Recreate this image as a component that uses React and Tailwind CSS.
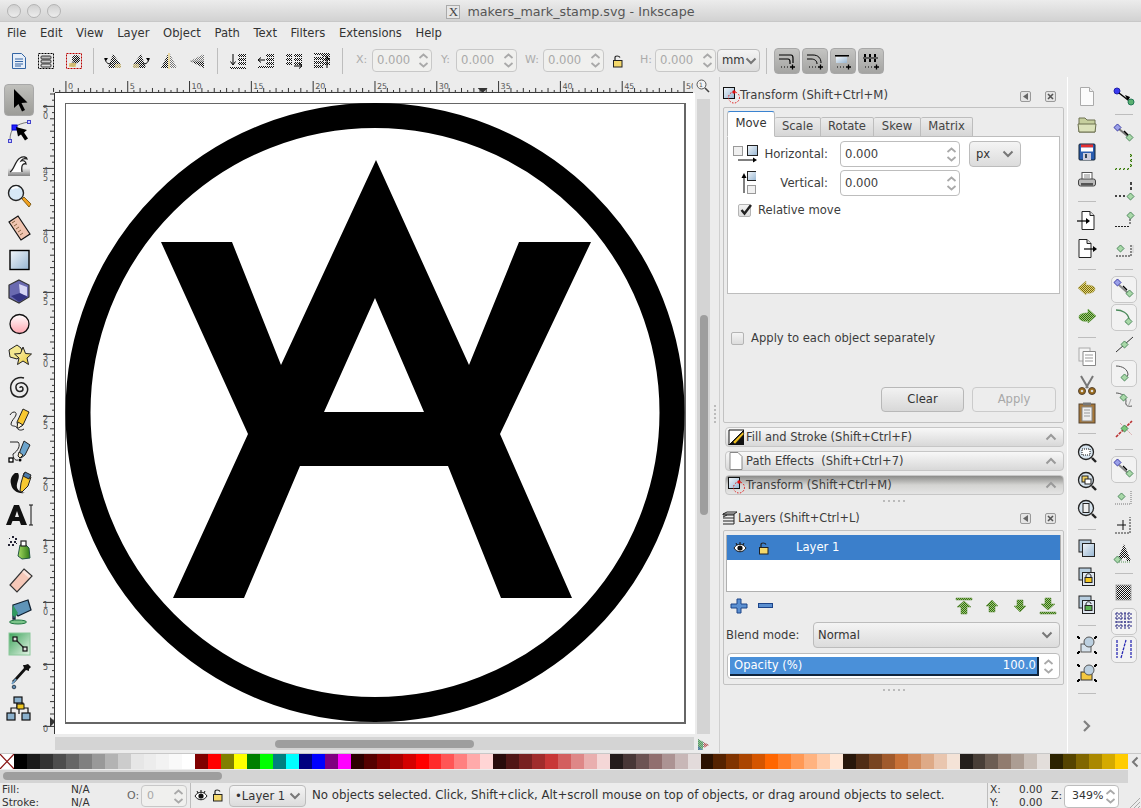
import React from "react";

const PALETTE = [
  "#000000","#1a1a1a","#333333","#4d4d4d","#666666","#808080","#999999","#b3b3b3","#cccccc","#e6e6e6","#ececec","#f2f2f2","#f9f9f9","#ffffff",
  "#800000","#ff0000","#808000","#ffff00","#008000","#00ff00","#008080","#00ffff","#000080","#0000ff","#800080","#ff00ff",
  "#2b0000","#550000","#800000","#aa0000","#d40000","#ff0000","#ff2a2a","#ff5555","#ff8080","#ffaaaa","#ffd5d5",
  "#280b0b","#501616","#782121","#a02c2c","#c83737","#d35f5f","#de8787","#e9afaf","#f4d7d7",
  "#241c1c","#483737","#6c5353","#916f6f","#ac9393","#c8b7b7","#e3dbdb",
  "#2b1100","#552200","#803300","#aa4400","#d45500","#ff6600","#ff7f2a","#ff9955","#ffb380","#ffccaa","#ffe6d5",
  "#28170b","#502d16","#784421","#a05a2c","#c87137","#d38d5f","#deaa87","#e9c6af","#f4e3d7",
  "#241f1c","#483e37","#6c5d53","#917c6f","#ac9d93","#c8beb7","#e3dedb",
  "#2b2200","#554400","#806600","#aa8800","#d4aa00","#ffcc00",
];

const MENU = ["File","Edit","View","Layer","Object","Path","Text","Filters","Extensions","Help"];

const Svg = ({ w = 24, h = 24, children }) => (
  <svg width={w} height={h} viewBox={`0 0 ${w} ${h}`} className="block shrink-0">{children}</svg>
);

// shared fills for the dithered inkscape icons
const Defs = () => (
  <svg width="0" height="0" className="absolute">
    <defs>
      {[["dk","#111","#ffffff80"],["gn","#2f6a12","#a4cc7a"],["ol","#7a6a10","#e4d878"],["gy","#777","#ffffff80"]].map(([id, c, bg]) => (
        <pattern key={id} id={id} width="2" height="2" patternUnits="userSpaceOnUse">
          <rect width="2" height="2" fill={bg} />
          <rect width="1" height="1" fill={c} />
          <rect x="1" y="1" width="1" height="1" fill={c} />
        </pattern>
      ))}
      <linearGradient id="gblue" x1="0" y1="0" x2="1" y2="1"><stop offset="0" stopColor="#f2f6fa" /><stop offset="1" stopColor="#97b6d2" /></linearGradient>
      <linearGradient id="gpink" x1="0" y1="0" x2="0" y2="1"><stop offset="0" stopColor="#fff" /><stop offset="1" stopColor="#ffa6b0" /></linearGradient>
      <linearGradient id="gyel" x1="0" y1="0" x2="1" y2="1"><stop offset="0" stopColor="#fff8c8" /><stop offset="1" stopColor="#e8c830" /></linearGradient>
      <linearGradient id="ggrey" x1="0" y1="0" x2="0" y2="1"><stop offset="0" stopColor="#eee" /><stop offset="1" stopColor="#777" /></linearGradient>
      <linearGradient id="ggreen" x1="0" y1="0" x2="1" y2="1"><stop offset="0" stopColor="#3fa45c" /><stop offset="1" stopColor="#e4f4e6" /></linearGradient>
      <linearGradient id="gbottle" x1="0" y1="0" x2="1" y2="0"><stop offset="0" stopColor="#a6dc60" /><stop offset="1" stopColor="#2f7a18" /></linearGradient>
    </defs>
  </svg>
);

/* ---------- left tool column ---------- */
const TOOLS = [
  <><path d="M9 3v19l4.500-4 3.500 7.500 3-1.500-3.500-7 6-.5z" fill="#000" /></>,
  <><path d="M5 22c0-11 5-16 19-18" fill="none" stroke="#777" /><rect x="7" y="7" width="5" height="5" fill="#22f" stroke="#00c" /><rect x="22.500" y="2.500" width="3" height="3" fill="#ccf" stroke="#44c" /><rect x="3.500" y="21.500" width="3" height="3" fill="#ccf" stroke="#44c" /><path d="M11 9l11 3-3 2.500 4 6-3 2-4-6-3 2z" fill="#000" /></>,
  <><path d="M3 18h22v8H3z" fill="url(#ggrey)" opacity="0.9" /><path d="M5 22c4-2 5-11 10-14 3-2 7-1 7 1-3-1-5 0-6 2 2-1 5 0 5 3-3-1-5 1-4 8" fill="#fff" stroke="#222" strokeWidth="1.300" /></>,
  <><circle cx="11" cy="11" r="7.500" fill="#d7e8f6" stroke="#222" strokeWidth="1.400" /><path d="M7 7c2-2 5-2 6-1" stroke="#fff" strokeWidth="2" fill="none" /><path d="M17 17l2-2 7 7-2 3z" fill="#f0a020" stroke="#6a4800" strokeWidth="0.800" /></>,
  <><path d="M4 8l9-6 12 18-9 6z" fill="#f0c4b0" stroke="#111" strokeWidth="1.200" /><path d="M7 9l3-2M9 12l3-2M11 15l3-2M13 18l3-2M15 21l3-2" stroke="#864" /></>,
  <><rect x="5" y="4.500" width="19" height="19" fill="url(#gblue)" stroke="#000" strokeWidth="1.400" /></>,
  <><path d="M14 2l10 5v12l-10 6-10-5V7z" fill="#6a6ab0" stroke="#333" strokeWidth="1.200" /><path d="M14 6l8 3v9l-7-2z" fill="#d6d6f4" /><path d="M6 18l9-3 8 4-9 5z" fill="#343482" /></>,
  <><circle cx="14.500" cy="14" r="9.500" fill="url(#gpink)" stroke="#111" strokeWidth="1.300" /></>,
  <><path d="M4 8l8-5 4 3 2 6-6 5-7-2z" fill="#f4e890" stroke="#222" /><path d="M18 5l2.500 6.500 6 .5-4.500 4 1.500 6.500-5.500-3.500-5.500 3.500 1.500-6.500-4.500-4 6-.5z" fill="url(#gyel)" stroke="#222" /></>,
  <><path d="M15 14c0-2 3-1.500 3 1 0 3-6 4-7-1-.8-5 6-7 10-3 4 5 0 13-8 12-8-1-9-11-5-16 3-3.500 8-4 11-3" fill="none" stroke="#222" strokeWidth="1.500" /></>,
  <><path d="M5 9c2-4 7-4 6 0-1 3-5 6-5 9 0 3 5 1 6 4 1 2 4 3 7 1" fill="none" stroke="#222" /><path d="M18 3l6 3-6 13-5 3-1-6z" fill="#f8c830" stroke="#222" /><path d="M13 16l5 3-4.500 3-1.500-1z" fill="#fff4d8" stroke="#222" /></>,
  <><path d="M5 4h8c3 3 0 9-5 12 0 4 2 7 5 6" fill="none" stroke="#222" /><rect x="4" y="20" width="4" height="4" fill="#fff" stroke="#000" strokeWidth="1.300" /><circle cx="15" cy="22" r="1.500" fill="#000" /><path d="M19 3l6 4-5 10-4 3-2-2 1-5z" fill="#6ca4cc" stroke="#222" /><path d="M14 14l4 3-3 3-2-2z" fill="#f8e8c0" stroke="#222" /></>,
  <><path d="M10 3c-4 3-5 7-4 11 1 6 6 10 14 9-6-1-9-4-8-9 1-4 3-8 1-11z" fill="#111" /><path d="M19 3l7 4-3 9-6 6-2-1 1-8z" fill="#f8c830" stroke="#222" /><path d="M20 2l6 3-2 4-6-3z" fill="#4a7aaa" stroke="#222" /></>,
  <><path d="M9 3h5l8 20h-6l-1.500-4h-7L6 23H1z" fill="#111" /><path d="M10 15h4l-2-6z" fill="#ececec" /><path d="M24 3h4M24 23h4M26 3v20" stroke="#111" /></>,
  <><path d="M15 11h6l3 3 1 10-8 1-4-3z" fill="url(#gbottle)" stroke="#254" /><rect x="16" y="7" width="5" height="5" fill="#fff" stroke="#222" strokeWidth="1.200" /><path d="M4 4h1v1H4zM7 2h2v2H7zM10 4h2v2h-2zM5 7h2v2H5zM9 7h2v2H9zM3 10h2v2H3zM7 10h2v2H7zM11 9h1v1h-1z" fill="#223" /></>,
  <><path d="M19 3l8 7-15 16-7-7z" fill="#f6c8b8" stroke="#333" strokeWidth="1.200" /><path d="M19 4l7 6-2 2-7-6z" fill="#fff" opacity="0.500" /></>,
  <><ellipse cx="13" cy="24" rx="8.500" ry="2" fill="#7cc48a" stroke="#274" /><path d="M8 7l15-5 3 10-13 6-3-3v6h-2z" fill="#5f94b8" stroke="#123" strokeWidth="1.300" /><path d="M8 7l5 8-3 4-3-2z" fill="#2f9a60" /></>,
  <><rect x="4" y="3" width="21" height="22" fill="url(#ggreen)" stroke="#8ac89a" /><path d="M10 9l10 10" stroke="#222" strokeWidth="1.200" /><rect x="8" y="7" width="4" height="4" fill="#ddd" stroke="#111" strokeWidth="1.200" /><rect x="18" y="17" width="4" height="4" fill="#ddd" stroke="#111" strokeWidth="1.200" /></>,
  <><path d="M23 2l3 3-2 2 0 2-3-1-9 10-3 3-2-2 3-3 9-10-1-3 2 0z" fill="#111" /><path d="M11 17l-4 5" stroke="#6a9ac0" strokeWidth="2" /><circle cx="9" cy="25" r="1.800" fill="#5c88ae" stroke="#345" /></>,
  <><path d="M12 9v5H6v6M16 9h2v5h5v6M14 12v8" fill="none" stroke="#111" strokeWidth="1.200" /><rect x="9" y="3" width="8" height="6" fill="#8ab0cc" stroke="#111" strokeWidth="1.200" /><rect x="12" y="10" width="7" height="5" fill="#f0c820" stroke="#111" /><rect x="2" y="19" width="8" height="7" fill="#8ab0cc" stroke="#111" strokeWidth="1.200" /><rect x="17" y="19" width="8" height="7" fill="#8ab0cc" stroke="#111" strokeWidth="1.200" /></>,
];

/* ---------- top command bar ---------- */
const DocBlue = () => (
  <Svg w={16} h={18}><path d="M1.500 1.500h9l4 4v11h-13z" fill="#e6eef8" stroke="#3465a4" /><path d="M4 7h8M4 9.500h8M4 12h8M4 14h6" stroke="#3465a4" /></Svg>
);
const SelAll = () => (
  <Svg w={18} h={18}><rect x="1.500" y="1.500" width="15" height="15" fill="none" stroke="#000" strokeDasharray="2 1" /><rect x="4" y="4" width="10" height="3" rx="1" fill="#bbb" stroke="#333" /><rect x="4" y="8" width="10" height="3" rx="1" fill="#ccc" stroke="#333" /><rect x="4" y="12" width="10" height="3" rx="1" fill="#ddd" stroke="#333" /></Svg>
);
const SelLayers = () => (
  <Svg w={18} h={18}><rect x="1.500" y="1.500" width="15" height="15" fill="none" stroke="#b00" strokeDasharray="2 1" /><path d="M4 14l8-10 3 3-6 8z" fill="#999" /><circle cx="11" cy="7" r="4" fill="url(#dk)" /><path d="M4 11h7v4H4z" fill="#e8c860" opacity="0.700" /></Svg>
);
const Rot = ({ flip }) => (
  <Svg w={18} h={18}><g transform={flip ? "translate(18 0) scale(-1 1)" : undefined}><path d="M9 2l8 11v3H4z" fill="url(#dk)" /><path d="M11 12h6v4h-6z" fill="#e8d8a0" opacity="0.700" /><path d="M1 7c1 4 3 5 6 5" fill="none" stroke="#000" /><path d="M0 6h4l-2 3z" fill="#000" /></g></Svg>
);
const FlipH = () => (
  <Svg w={18} h={18}><path d="M8 2v14H1z" fill="url(#dk)" /><path d="M10 2v14h7z" fill="url(#gy)" /><path d="M9 1v16" stroke="#e8c860" /></Svg>
);
const FlipV = () => (
  <Svg w={18} h={18}><path d="M16 2v7L2 9z" fill="url(#gy)" /><path d="M16 16V9L2 9z" fill="url(#dk)" /><path d="M2 9h14" stroke="#bbb" /></Svg>
);
const Order = ({ kind }) => (
  <Svg w={18} h={18}>
    <path d="M9 2h8v3H9zM9 6h8v3H9zM9 10h8v3H9z" fill="url(#dk)" />
    {kind === 0 && <><path d="M4 2v10M1.500 9.500L4 13l2.500-3.500" stroke="#000" fill="none" /><path d="M1 15h16v2H1z" fill="url(#dk)" /></>}
    {kind === 1 && <><path d="M8 8H2M4 5.500L1 8l3 2.500" stroke="#000" fill="none" /><path d="M1 14h16v2H1z" fill="url(#dk)" /></>}
    {kind === 2 && <><path d="M1 2h6v3H1zM1 6h6v3H1zM1 10h6v3H1z" fill="url(#dk)" /><path d="M9 14h7M14 11.500l3 2.500-3 2.500" stroke="#000" fill="none" /></>}
    {kind === 3 && <><path d="M1 1h16v2H1z" fill="url(#dk)" /><path d="M14 16V5M11.500 8L14 4.500 16.500 8" stroke="#000" fill="none" /><path d="M1 5h9v3H1zM1 9h9v3H1zM1 13h9v3H1z" fill="url(#dk)" /></>}
  </Svg>
);
const TinyLock = ({ open }) => (
  <Svg w={12} h={14}><path d={open ? "M3 6V3.500c0-2 4-2 5 0" : "M3 6V3.500c0-3 6-3 6 0V6"} fill="none" stroke="#222" strokeWidth="1.200" /><rect x="1.500" y="6.500" width="8.500" height="6.500" fill="#f4d86a" stroke="#222" /></Svg>
);
const SnapSmall = ({ kind }) => (
  <Svg w={20} h={18}>
    {kind === 0 && <path d="M2 3h12c2 0 2 1 2 3v5M2 7h9c2 0 2 1 2 3v2" fill="none" stroke="#000" strokeWidth="1.200" />}
    {kind === 1 && <path d="M2 3h6c5 0 8 3 8 8M2 7h4c4 0 6 2 6 5" fill="none" stroke="#000" />}
    {kind === 2 && <><path d="M2 3h14v1.500H2z" fill="#000" /><path d="M3 5h11v6H3z" fill="url(#gblue)" /></>}
    {kind === 3 && <path d="M3 2h2v3H3zM8 2h2v3H8zM13 2h2v3h-2zM3 7h2v3H3zM8 7h2v3H8zM13 7h2v3h-2zM2 5.500h15v1H2z" fill="#000" />}
    <path d="M4 15h1M7 15h1M10 15h1" stroke="#000" />
    <path d="M13 15h5M15.500 12.500v5" stroke="#000" strokeWidth="1.300" />
  </Svg>
);

const Arrows = () => (
  <div className="flex flex-col w-[14px] h-full items-center justify-center gap-[3px] text-[#a9a9a9]">
    <svg width="11" height="6"><path d="M1.500 5L5.500 1.500 9.500 5" fill="none" stroke="currentColor" strokeWidth="1.800" /></svg>
    <svg width="11" height="6"><path d="M1.500 1L5.500 4.500 9.500 1" fill="none" stroke="currentColor" strokeWidth="1.800" /></svg>
  </div>
);
const Down = ({ c = "#777" }) => (
  <svg width="12" height="8" className="shrink-0"><path d="M1.500 1.500L6 6l4.500-4.500" fill="none" stroke={c} strokeWidth="2" /></svg>
);

const Spin = ({ value, className, text = "text-[#3c3c3c]" }) => (
  <div className={`flex items-center rounded-[4px] border border-[#bdbdbd] bg-white pl-[4px] pr-[1px] ${className}`}>
    <span className={`flex-1 pt-px text-[11.600px] ${text}`}>{value}</span>
    <Arrows />
  </div>
);
const DimSpin = ({ className }) => (
  <div className={`flex items-center rounded-[4px] border border-[#c8c8c8] bg-[#f0f0ee] pl-[4px] pr-[1px] h-[23px] ${className}`}>
    <span className="flex-1 pt-px text-[11.600px] text-[#a8a8a8]">0.000</span>
    <Arrows />
  </div>
);
const Combo = ({ label, className, pad = "px-[6px]" }) => (
  <div className={`flex items-center justify-between rounded-[4px] border border-[#bcbcbc] bg-gradient-to-b from-[#f4f4f4] to-[#dcdcdc] text-[11.600px] text-[#333] ${pad} ${className}`}>
    <span className="pt-px">{label}</span>
    <Down />
  </div>
);

const Sep = () => <div className="w-px h-[26px] bg-[#bdbdbd] shrink-0" />;
const Dim = ({ children, className }) => <span className={`text-[11px] text-[#ababab] ${className}`}>{children}</span>;

const TBtn = ({ children, className }) => (
  <div className={`flex items-center justify-center h-[28px] shrink-0 ${className}`}>{children}</div>
);

/* ---------- rulers ---------- */
const HRuler = () => {
  const ticks = [];
  for (let i = -2; i <= 100; i++) {
    const x = 66 + i * 6.2;
    const major = i >= 0 && i % 10 === 0;
    ticks.push(<line key={i} x1={x} x2={x} y1={major ? 81 : i % 2 === 0 ? 88 : 90} y2={92} stroke="#333" />);
  }
  return (
    <svg width="657" height="16" viewBox="38 77 657 16" className="block">
      <line x1="55" x2="695" y1="92.500" y2="92.500" stroke="#333" />
      {ticks}
      {Array.from({ length: 11 }, (_, i) => (
        <text key={i} x={68 + i * 62} y="89" fontSize="8" fill="#555" fontFamily="DejaVu Sans">{i * 5}</text>
      ))}
      <path d="M479 88h10l-5 5z" fill="#333" />
    </svg>
  );
};
const VRuler = () => {
  const ticks = [];
  for (let i = 0; i <= 102; i++) {
    const y = 94 + i * 6.2;
    const k = i - 2;
    const major = k % 10 === 0;
    ticks.push(<line key={i} y1={y} y2={y} x1={major ? 43 : k % 2 === 0 ? 50 : 52} x2={55} stroke="#333" />);
  }
  return (
    <svg width="17" height="641" viewBox="38 93 17 641" className="block shrink-0">
      <line y1="93" y2="734" x1="54.500" x2="54.500" stroke="#333" />
      {ticks}
      {Array.from({ length: 11 }, (_, i) => {
        const y = 104 + i * 62;
        const label = String(50 - i * 5);
        return label.split("").map((d, j) => (
          <text key={`${i}-${j}`} x="43" y={y + 8 + j * 7.300} fontSize="8" fill="#555" fontFamily="DejaVu Sans">{d}</text>
        ));
      })}
      <path d="M50 717l5 5-5 5z" fill="#333" />
    </svg>
  );
};

/* ---------- right column icons ---------- */
const PageI = (
  <><path d="M5.500 2.500h9l4 4v14h-13z" fill="#fbfbfb" stroke="#aaa" /><path d="M14.500 2.500v4h4" fill="#eee" stroke="#aaa" /></>
);
const COL1 = [
  [PageI],
  [<><path d="M4 5h6l2 2h8v12H4z" fill="#c6cf9e" stroke="#6c7050" /><path d="M3 11h18l-1 8H4z" fill="#dbe2ba" stroke="#6c7050" /></>],
  [<><rect x="4" y="3" width="16" height="16" rx="1" fill="#2a5db0" stroke="#123" /><rect x="6" y="3.500" width="12" height="3" fill="#e53030" /><rect x="6" y="6.500" width="12" height="4" fill="#fff" /><rect x="8" y="12" width="8" height="7" fill="#ccd" /><rect x="10" y="13" width="2" height="4" fill="#345" /></>],
  [<><rect x="7" y="3.500" width="10" height="7" fill="#fff" stroke="#555" /><path d="M9 6h6M9 8h6" stroke="#888" /><rect x="3.500" y="10" width="17" height="7" rx="2" fill="#bbb" stroke="#444" /><rect x="6" y="14" width="12" height="2.500" fill="#555" /></>],
  "sep",
  [<><path d="M7 2.500h8l4 4v14H7z" fill="#fff" stroke="#222" /><path d="M15 2.500v4h4" fill="#ddd" stroke="#222" /><path d="M2 12h11" stroke="#000" strokeWidth="1.200" /><path d="M11 9l4 3-4 3z" fill="#000" /></>],
  [<><path d="M4 2.500h8l4 4v14H4z" fill="#fff" stroke="#222" /><path d="M12 2.500v4h4" fill="#ddd" stroke="#222" /><path d="M9 12h10" stroke="#000" strokeWidth="1.200" /><path d="M18 9l4 3-4 3z" fill="#000" /></>],
  "sep",
  [<path d="M3 11l8-7v4c5 0 9 1 9 4 0 3-4 5-9 4v2z" fill="url(#ol)" stroke="#b4a860" strokeWidth="0.500" />],
  [<path d="M21 11l-8-7v4c-5 0-9 1-9 4 0 3 4 5 9 4v2z" fill="url(#gn)" stroke="#5a9a3a" strokeWidth="0.500" />],
  "sep",
  [<><rect x="4" y="3" width="11" height="13" fill="#f4f4f4" stroke="#aaa" /><path d="M8 6.500h12.500v14H8z" fill="#fff" stroke="#888" /><path d="M10 10h8M10 13h8M10 16h8" stroke="#999" /></>],
  [<><path d="M6 3l7 12M18 3l-7 12" stroke="#777" strokeWidth="2" /><circle cx="7" cy="18" r="3.500" fill="#9a6a1a" stroke="#543" /><circle cx="17" cy="18" r="3.500" fill="#9a6a1a" stroke="#543" /><circle cx="7" cy="18" r="1.300" fill="#ddd" /><circle cx="17" cy="18" r="1.300" fill="#ddd" /></>],
  [<><rect x="4" y="3" width="16" height="19" fill="#a87838" stroke="#543" /><rect x="7" y="6" width="10" height="14" fill="#eee" stroke="#888" /><path d="M9 9h6M9 12h6M9 15h6" stroke="#999" /><rect x="8" y="1.500" width="8" height="3" fill="#777" /></>],
  "sep",
  [<><circle cx="11" cy="11" r="7.500" fill="#d7e4ee" stroke="#222" strokeWidth="1.300" /><rect x="7" y="8" width="8" height="6" fill="#fff" stroke="#111" strokeDasharray="1 1" /><path d="M17 17l4 4" stroke="#222" strokeWidth="2.400" /></>],
  [<><circle cx="11" cy="11" r="7.500" fill="#d7e4ee" stroke="#222" strokeWidth="1.300" /><rect x="7" y="7" width="6" height="6" fill="#f0d060" stroke="#222" /><rect x="10" y="10" width="6" height="5" fill="#fff" stroke="#222" /><path d="M17 17l4 4" stroke="#222" strokeWidth="2.400" /></>],
  [<><circle cx="11" cy="11" r="7.500" fill="#d7e4ee" stroke="#222" strokeWidth="1.300" /><rect x="8" y="6.500" width="6" height="9" fill="#eee" stroke="#222" /><path d="M17 17l4 4" stroke="#222" strokeWidth="2.400" /></>],
  "sep",
  [<><rect x="4" y="3" width="12" height="12" fill="#b8cee0" stroke="#222" /><rect x="7.500" y="6.500" width="12" height="13" fill="url(#gblue)" stroke="#222" /></>],
  [<><rect x="4" y="3" width="12" height="12" fill="#b8cee0" stroke="#222" /><rect x="7.500" y="7.500" width="12" height="13" fill="#dfe7f0" stroke="#222" /><path d="M11 12.500v-1.500c0-3 5-3 5 0v1.500" fill="none" stroke="#222" /><rect x="10" y="12.500" width="7" height="5" fill="#f4c820" stroke="#222" /></>],
  [<><rect x="4" y="3" width="12" height="12" fill="#b8cee0" stroke="#222" /><rect x="7.500" y="7.500" width="12" height="13" fill="#dfe7f0" stroke="#222" /><path d="M11 12.500v-1.500c0-3 5-3 5 0" fill="none" stroke="#222" /><rect x="10" y="12.500" width="7" height="5" fill="#5cb050" stroke="#222" /></>],
  "sep",
  [<><path d="M3 5h2M19 5h2M3 19h2M19 19h2M3 3v2M21 3v2M3 19v2M21 19v2" stroke="#000" strokeWidth="2" /><rect x="6" y="11" width="10" height="8" fill="#d6e2ec" stroke="#555" /><circle cx="14" cy="9" r="5" fill="#bcd0e0" stroke="#555" /></>],
  [<><path d="M3 5h2M19 5h2M3 19h2M19 19h2M3 3v2M21 3v2M3 19v2M21 19v2" stroke="#000" strokeWidth="2" /><rect x="6" y="11" width="11" height="8" fill="#f4c840" stroke="#333" /><circle cx="14" cy="9" r="5" fill="#bcd0e0" stroke="#555" /></>],
  "sep",
];

const Node = ({ x, y, c = "url(#gy)" }) => <rect x={x} y={y} width="5" height="5" transform={`rotate(45 ${x + 2.5} ${y + 2.5})`} fill={c} stroke="#3a7a4a" strokeWidth="0.800" />;
const BlueNode = ({ x, y }) => <rect x={x} y={y} width="5" height="5" transform={`rotate(45 ${x + 2.5} ${y + 2.5})`} fill="#9aa0e8" stroke="#22229a" strokeWidth="0.800" />;

const COL2 = [
  { h: 27, i: <><circle cx="5" cy="6" r="3" fill="#3a3af0" stroke="#22a" /><path d="M7 8l9 7" stroke="#000" strokeWidth="1.400" /><path d="M13 10l5 2-2 4z" fill="#000" /><circle cx="19" cy="17" r="3" fill="#5ab070" stroke="#275" /></> },
  { h: 8 },
  { h: 29, i: <><path d="M7 8l11 9" stroke="#777" strokeWidth="2" /><BlueNode x={3} y={4} /><Node x={15} y={14} c="#a8d8a8" /><path d="M12 10l4 4" stroke="#000" strokeWidth="1.400" /></> },
  { h: 29, i: <path d="M18 4h2v3h-2zM18 9h2v3h-2zM18 14h2v3h-2zM3 18h2v2H3zM7 18h2v2H7zM11 18h2v2h-2zM15 18h2v2h-2z" fill="url(#gn)" /> },
  { h: 29, i: <><path d="M18 3h2v3h-2zM18 8h2v3h-2zM3 16h2v2H3zM7 16h2v2H7zM11 16h2v2h-2z" fill="#444" /><Node x={16} y={15} c="#a8d8a8" /></> },
  { h: 29, i: <><path d="M3 18.500h14M18 16v-8" stroke="#222" strokeDasharray="2 1" fill="none" /><Node x={16} y={5} c="#a8d8a8" /></> },
  { h: 29, i: <><path d="M4 19h15M19 19V8" stroke="#222" strokeDasharray="2 1" fill="none" /><Node x={6} y={9} c="#a8d8a8" /><path d="M21 8v8" stroke="#ccc" /></> },
  { h: 12 },
  { h: 28, box: 1, i: <><path d="M7 8l10 9" stroke="#888" strokeWidth="2" /><BlueNode x={3} y={3} /><Node x={15} y={14} c="#a8d8a8" /><path d="M11 9l4 4" stroke="#000" strokeWidth="1.200" /></> },
  { h: 28, box: 1, i: <><path d="M4 5c6 0 12 3 13 9l-3 4" fill="none" stroke="#4a8a5a" strokeWidth="1.300" /><Node x={14} y={14} c="#a8d8a8" /></> },
  { h: 28, i: <><path d="M4 19L21 4" stroke="#333" /><Node x={10} y={9} c="#a8d8a8" /></> },
  { h: 28, box: 1, i: <><path d="M4 5c6 0 12 3 12 9l-3 4" fill="none" stroke="#555" /><Node x={10} y={14} c="#a8d8a8" /></> },
  { h: 28, i: <><path d="M4 4c5 0 10 3 10 8-1 5 2 6 6 5" fill="none" stroke="#555" /><path d="M19 10l-3 8" stroke="#aaa" /><Node x={9} y={6} c="#a8d8a8" /></> },
  { h: 28, i: <><path d="M4 20L20 4" stroke="#b33" strokeDasharray="3 1" strokeWidth="1.600" /><path d="M8 6l12 12" stroke="#b33" strokeDasharray="3 1" opacity="0.400" /><Node x={10} y={9} c="#7ac87a" /></> },
  { h: 12 },
  { h: 28, box: 1, i: <><path d="M7 8l10 9" stroke="#888" strokeWidth="2" /><BlueNode x={3} y={3} /><Node x={15} y={14} c="#a8d8a8" /><path d="M11 9l4 4" stroke="#000" strokeWidth="1.200" /></> },
  { h: 28, i: <><path d="M3 19h15M19 19V5" stroke="#777" strokeDasharray="1 1" fill="none" /><Node x={7} y={9} c="#a8d8a8" /></> },
  { h: 28, i: <><path d="M3 20h15M18 20V4" stroke="#333" strokeDasharray="2 1" fill="none" /><path d="M5 12h9M11 7v10" stroke="#111" /></> },
  { h: 28, i: <><path d="M5 20L12 3l7 17h-4l-1-3h-4l-1 3z" fill="url(#dk)" /><Node x={3} y={16} c="#a8d8a8" /><path d="M7 21h12" stroke="#5a9a5a" strokeDasharray="1 1" /></> },
  { h: 12 },
  { h: 28, i: <rect x="4" y="4" width="15" height="15" fill="url(#dk)" stroke="#aaa" /> },
  { h: 28, box: 1, i: <path d="M5 3v17M9 3v17M13 3v17M17 3v17M3 5h17M3 9h17M3 13h17M3 17h17" stroke="#23237e" strokeDasharray="2 1" /> },
  { h: 28, box: 1, i: <path d="M5 3v18M19 3v18M9 21l5-18" stroke="#2a2ab4" strokeWidth="1.300" strokeDasharray="3 1" fill="none" /> },
];

/* ---------- dock pieces ---------- */
const TransformI = () => (
  <Svg w={17} h={17}><rect x="0.500" y="0.500" width="11" height="11" fill="url(#gblue)" stroke="#111" /><circle cx="11" cy="10.500" r="5.500" fill="none" stroke="#e01010" strokeDasharray="1.500 1.500" /><circle cx="11" cy="5" r="1.700" fill="#e01010" /></Svg>
);
const DockBtns = () => (
  <div className="flex items-center gap-[14px] text-[#777]">
    <div className="w-[11px] h-[11px] rounded-[2px] border border-[#999] bg-[#e4e4e4] flex items-center justify-center">
      <svg width="5" height="7"><path d="M5 0v7L0 3.500z" fill="#666" /></svg>
    </div>
    <div className="w-[11px] h-[11px] rounded-[2px] border border-[#999] bg-[#e4e4e4] flex items-center justify-center">
      <svg width="7" height="7"><path d="M1 1l5 5M6 1L1 6" stroke="#555" strokeWidth="1.600" /></svg>
    </div>
  </div>
);
const Dots = ({ className }) => (
  <div className={`flex justify-center gap-[3px] ${className}`}>
    {[0, 1, 2, 3, 4].map((d) => <span key={d} className="w-[2px] h-[2px] bg-[#bbb]" />)}
  </div>
);
const Up = () => (
  <svg width="12" height="8" className="shrink-0"><path d="M1.500 6.500L6 2l4.500 4.500" fill="none" stroke="#9a9a9a" strokeWidth="2" /></svg>
);
const Bar = ({ icon, label, dark }) => (
  <div className={`flex items-center h-[20px] w-[339px] ml-[5px] pl-[1px] pr-[6px] rounded-[4px] border border-[#c6c6c6] ${dark ? "bg-gradient-to-b from-[#8c8c8a] via-[#d4d4d2] to-[#e4e4e4]" : "bg-gradient-to-b from-[#f8f8f8] to-[#d8d8d8]"}`}>
    <div className="w-[18px] flex justify-center shrink-0">{icon}</div>
    <span className="flex-1 ml-[1px] pt-px text-[11.500px] text-[#3c3c3c] whitespace-pre">{label}</span>
    <Up />
  </div>
);
const Check = ({ on, className }) => (
  <div className={`w-[13px] h-[13px] rounded-[2px] border border-[#b4b4b4] bg-gradient-to-b from-[#f4f4f4] to-[#dcdcdc] relative shrink-0 ${className}`}>
    {on && <svg width="16" height="14" className="absolute -top-[2px] left-0"><path d="M2.500 7l3 3.500L12 2" fill="none" stroke="#222" strokeWidth="2.400" /></svg>}
  </div>
);
const Arrow = ({ d, fill = "url(#gn)" }) => (
  <Svg w={18} h={18}><path d={d} fill={fill} stroke="#5f8a3e" strokeWidth="0.500" /></Svg>
);
const Eye = () => (
  <Svg w={14} h={12}><path d="M1 6c3-5 9-5 12 0-3 5-9 5-12 0z" fill="#fff" stroke="#111" /><circle cx="7" cy="6" r="2.600" fill="#111" /><path d="M3 1l1 2M7 0v2M11 1l-1 2" stroke="#111" /></Svg>
);

const TABS = [["Scale", "w-[46px]"], ["Rotate", "w-[53px]"], ["Skew", "w-[47px]"], ["Matrix", "w-[52px]"]];

const TransformPanel = () => (
  <div className="ml-[3px] w-[341px] h-[316px] border border-[#c2c2c2] rounded-[2px] pl-[3px] pt-[4px] shrink-0">
    <div className="flex items-end h-[25px] -mb-px relative">
      <div className="w-[48px] h-[26px] bg-white rounded-t-[3px] border border-[#bdbdbd] border-b-white border-t-[#3b83d0] flex items-center justify-center text-[11.600px] text-[#333]">Move</div>
      {TABS.map(([t, w]) => (
        <div key={t} className={`${w} h-[20px] bg-gradient-to-b from-[#ececec] to-[#d6d6d6] border border-l-0 border-[#bdbdbd] rounded-t-[2px] flex items-center justify-center text-[11.600px] text-[#444]`}>{t}</div>
      ))}
    </div>
    <div className="w-[333px] h-[158px] bg-white border border-[#bdbdbd] pt-[4px]">
      <div className="flex items-center h-[26px]">
        <div className="w-[30px] pl-[5px]">
          <Svg w={25} h={20}><rect x="0.500" y="2.500" width="9" height="9" fill="#f0f0f0" stroke="#999" /><rect x="14.500" y="1.500" width="10" height="10" fill="url(#gblue)" stroke="#222" /><path d="M5 16h16" stroke="#000" /><path d="M20 13.500l4 2.500-4 2.500z" fill="#000" /></Svg>
        </div>
        <div className="w-[70px] pt-px text-right text-[11.700px] text-[#3c3c3c]">Horizontal:</div>
        <Spin value="0.000" className="ml-[12px] w-[120px] h-[26px]" />
        <Combo label="px" className="ml-[9px] w-[52px] h-[26px]" />
      </div>
      <div className="flex items-center h-[26px] mt-[3px]">
        <div className="w-[30px] pl-[12px]">
          <Svg w={16} h={26}><path d="M4 6v17" stroke="#000" /><path d="M1.500 8L4 3l2.500 5z" fill="#000" /><rect x="7.500" y="1.500" width="9" height="9" fill="url(#gblue)" stroke="#222" /><rect x="7.500" y="15.500" width="8" height="8" fill="#f0f0f0" stroke="#999" /></Svg>
        </div>
        <div className="w-[70px] pt-px text-right text-[11.700px] text-[#3c3c3c]">Vertical:</div>
        <Spin value="0.000" className="ml-[12px] w-[120px] h-[26px]" />
      </div>
      <div className="flex items-center mt-[6px] pl-[10px] gap-[7px]">
        <Check on />
        <span className="text-[11.600px] text-[#3c3c3c]">Relative move</span>
      </div>
    </div>
    <div className="flex items-center mt-[36px] ml-[4px] gap-[7px]">
      <Check />
      <span className="text-[11.600px] text-[#3c3c3c]">Apply to each object separately</span>
    </div>
    <div className="flex justify-end gap-[8px] mt-[40px] pr-[7px]">
      <div className="w-[83px] h-[25px] rounded-[4px] border border-[#b8b8b8] bg-gradient-to-b from-[#f2f2f2] to-[#d8d8d8] flex items-center justify-center text-[11.600px] text-[#333]">Clear</div>
      <div className="w-[84px] h-[25px] rounded-[4px] border border-[#cbcbcb] bg-[#ededed] flex items-center justify-center text-[11.600px] text-[#a8a8a8]">Apply</div>
    </div>
  </div>
);

const LayersPanel = () => (
  <div className="ml-[3px] w-[341px] h-[155px] border border-[#c2c2c2] rounded-[2px] px-[2px] pt-[4px] shrink-0">
    <div className="w-[335px] h-[57px] bg-white border border-[#b0b0b0] border-t-0">
      <div className="flex items-center h-[25px] bg-[#3b7fcb] text-white">
        <div className="ml-[6px]"><Eye /></div>
        <div className="ml-[11px]"><TinyLock open /></div>
        <span className="ml-[26px] pt-px text-[11.600px]">Layer 1</span>
      </div>
    </div>
    <div className="flex items-center h-[28px] pl-[4px] pr-[4px]">
      <Svg w={18} h={16}><path d="M7 1h4v5h6v4h-6v5H7v-5H1V6h6z" fill="#5b8fd0" stroke="#1d4488" /></Svg>
      <div className="ml-[10px]"><Svg w={16} h={8}><rect x="0.500" y="1.500" width="14" height="4" fill="#5b8fd0" stroke="#1d4488" /></Svg></div>
      <div className="ml-auto flex gap-[10px]">
        <Arrow d="M1 1h16v2H1zM9 4l7 6h-4v7H6v-7H2z" />
        <Arrow d="M9 3l6 6h-3v6H6V9H3z" />
        <Arrow d="M9 15l6-6h-3V3H6v6H3z" />
        <Arrow d="M1 15h16v2H1zM9 13l7-6h-4V1H6v6H2z" />
      </div>
    </div>
    <div className="flex items-center h-[26px] mt-[2px]">
      <span className="text-[11.600px] pt-px text-[#3c3c3c] w-[87px] shrink-0">Blend mode:</span>
      <Combo label="Normal" className="w-[247px] h-[26px]" pad="pl-[4px] pr-[6px]" />
    </div>
    <div className="flex items-center w-[333px] h-[26px] ml-[1px] mt-[5px] rounded-[4px] border border-[#bdbdbd] bg-white pl-[2px] pr-[1px]">
      <div className="flex-1 h-[19px] bg-[#4a90d9] border-r-[2px] border-b-[2px] border-[#10243c] flex items-center justify-between text-[11.600px] text-white pl-[4px] pr-px pt-[2px]">
        <span>Opacity (%)</span>
        <span>100.0</span>
      </div>
      <div className="w-[19px] h-full flex justify-center"><Arrows /></div>
    </div>
  </div>
);

const CanvasArt = () => (
  <svg width="619" height="618" viewBox="66 104 619 618" className="block overflow-visible">
    <circle cx="375" cy="412.500" r="297" fill="none" stroke="#000" strokeWidth="25" />
    <path fillRule="evenodd" fill="#000" d="M161 242H232L281 365L376 160L469 365L519 242H591L500 434L572 598H501L448 466H300L244 598H173L248 434Z M375 298L324 412H424Z" />
  </svg>
);

export default function App() {
  return (
    <div className="w-[1141px] h-[808px] overflow-hidden flex flex-col bg-[#ececec] text-[#333] font-['DejaVu_Sans',sans-serif]">
      <Defs />
      {/* title bar */}
      <div className="relative h-[22px] shrink-0 flex items-center justify-center pt-[3px] bg-gradient-to-b from-[#ececec] to-[#d2d2d2] border-b border-[#c8c8c8]">
        <div className="absolute left-[7px] top-[4px] flex gap-[6px]">
          {[0, 1, 2].map((b) => <span key={b} className="w-[14px] h-[14px] rounded-full border border-[#b4b4b4] bg-gradient-to-b from-[#d0d0d0] to-[#ededed]" />)}
        </div>
        <div className="flex items-center gap-[7px]">
          <div className="w-[14px] h-[14px] border border-[#aaa] bg-[#e6e6e6] flex items-center justify-center font-['Liberation_Serif',serif] text-[13px] text-[#444]">X</div>
          <span className="text-[12.700px] text-[#555]">makers_mark_stamp.svg - Inkscape</span>
        </div>
      </div>
      {/* menu */}
      <div className="h-[22px] shrink-0 flex items-center pl-[7px] pt-px gap-[13.600px] text-[11.600px] text-[#333]">
        {MENU.map((m) => <span key={m}>{m}</span>)}
      </div>
      {/* command bar */}
      <div className="h-[33px] shrink-0 flex items-center pl-[10px]">
        <TBtn className="w-[17px]"><DocBlue /></TBtn>
        <TBtn className="w-[18px] ml-[10px]"><SelAll /></TBtn>
        <TBtn className="w-[18px] ml-[10px]"><SelLayers /></TBtn>
        <div className="ml-[10px]"><Sep /></div>
        <TBtn className="w-[18px] ml-[10px]"><Rot /></TBtn>
        <TBtn className="w-[18px] ml-[10px]"><Rot flip /></TBtn>
        <TBtn className="w-[18px] ml-[10px]"><FlipH /></TBtn>
        <TBtn className="w-[18px] ml-[10px]"><FlipV /></TBtn>
        <div className="ml-[11px]"><Sep /></div>
        <TBtn className="w-[18px] ml-[11px]"><Order kind={0} /></TBtn>
        <TBtn className="w-[18px] ml-[10px]"><Order kind={1} /></TBtn>
        <TBtn className="w-[18px] ml-[10px]"><Order kind={2} /></TBtn>
        <TBtn className="w-[18px] ml-[10px]"><Order kind={3} /></TBtn>
        <div className="ml-[11px]"><Sep /></div>
        <Dim className="ml-[13px] w-[16px]">X:</Dim>
        <DimSpin className="w-[60px]" />
        <Dim className="ml-[9px] w-[15px]">Y:</Dim>
        <DimSpin className="w-[61px]" />
        <Dim className="ml-[8px] w-[18px]">W:</Dim>
        <DimSpin className="w-[61px]" />
        <div className="ml-[8px]"><TinyLock open /></div>
        <Dim className="ml-[16px] w-[16px]">H:</Dim>
        <DimSpin className="ml-[-1px] w-[61px]" />
        <Combo label="mm" className="ml-px w-[43px] h-[23px]" pad="px-[4px]" />
        <div className="ml-[6px]"><Sep /></div>
        <div className="ml-[7px] flex gap-[2px]">
          {[0, 1, 2, 3].map((k) => (
            <div key={k} className="w-[26px] h-[26px] rounded-[4px] border border-[#a8a8a8] bg-gradient-to-b from-[#c4c4c2] to-[#a4a4a2] flex items-center justify-center"><SnapSmall kind={k} /></div>
          ))}
        </div>
      </div>
      {/* main area */}
      <div className="flex h-[676px] shrink-0">
        {/* tools */}
        <div className="w-[38px] shrink-0 flex flex-col items-center pt-[7px] pr-[1px]">
          {TOOLS.map((t, i) => (
            <div key={i} className={`w-[30px] h-[32px] flex items-center justify-center ${i === 0 ? "rounded-[4px] border border-[#a8a8a8] bg-gradient-to-b from-[#c0c0bc] to-[#9c9c98]" : ""}`}>
              <Svg w={28} h={28}>{t}</Svg>
            </div>
          ))}
        </div>
        {/* canvas */}
        <div className="w-[672px] shrink-0 flex flex-col">
          <div className="h-[16px] flex">
            <HRuler />
            <div className="ml-[2px]">
              <Svg w={15} h={16}><circle cx="6.500" cy="7.500" r="4.500" fill="#f4f4f4" stroke="#555" /><path d="M10 11l4 4" stroke="#444" strokeWidth="1.600" /><text x="4" y="10" fontSize="6" fill="#555" fontFamily="DejaVu Sans">1</text></Svg>
            </div>
          </div>
          <div className="h-[641px] flex">
            <VRuler />
            <div className="w-[640px] h-full bg-white pl-[10px] pt-[10px] overflow-hidden">
              <div className="w-[621px] h-[621px] border border-r-[2px] border-b-[2px] border-[#666] box-border">
                <CanvasArt />
              </div>
            </div>
            <div className="ml-[2px] mt-[6px] w-[13px] bg-[#d4d4d4] flex flex-col pt-[216px] items-center">
              <div className="w-[8px] h-[200px] rounded-full bg-[#9e9e9e]" />
            </div>
          </div>
          <div className="flex pl-[17px] pt-[3px] h-[19px]">
            <div className="w-[639px] h-[13px] bg-[#d4d4d4] pl-[220px] pt-[2.500px]">
              <div className="w-[199px] h-[8px] rounded-full bg-[#9e9e9e]" />
            </div>
            <div className="ml-[3px] mt-[1px]">
              <Svg w={13} h={13}><path d="M1 1l11 6-11 5z" fill="url(#gy)" /><path d="M1 1l5 3v8l-5 0z" fill="#4aa85a" opacity="0.600" /><path d="M7 4.500l5 2.500-5 3z" fill="#d85050" opacity="0.500" /><path d="M1 8l5 4H1z" fill="#4060c8" opacity="0.500" /></Svg>
            </div>
          </div>
        </div>
        {/* grip */}
        <div className="w-[9px] shrink-0 flex flex-col items-center pt-[328px] gap-[2px]">
          {[0, 1, 2, 3, 4].map((d) => <span key={d} className="w-[2px] h-[2px] bg-[#bbb]" />)}
        </div>
        {/* dock */}
        <div className="w-[349px] shrink-0 border-l border-[#cfcfcf] border-r border-r-white flex flex-col">
          <div className="h-[30px] shrink-0 flex items-center justify-between pl-[3px] pr-[11px] pt-[8px]">
            <div className="flex items-center">
              <TransformI />
              <span className="text-[11.700px] text-[#3c3c3c]">Transform (Shift+Ctrl+M)</span>
            </div>
            <DockBtns />
          </div>
          <TransformPanel />
          <div className="flex flex-col gap-[4px] mt-[4px] shrink-0">
            <Bar label="Fill and Stroke (Shift+Ctrl+F)" icon={<Svg w={17} h={17}><path d="M0 16L16 1v15z" fill="#111" /><path d="M1 1h15L1 16z" fill="#fff" stroke="#111" /><path d="M5 13L15 3l1 2-9 10z" fill="#f0c020" stroke="#222" strokeWidth="0.500" /></Svg>} />
            <Bar label="Path Effects  (Shift+Ctrl+7)" icon={<Svg w={14} h={18}><path d="M1 .500h8l4 4v13H1z" fill="#fff" stroke="#888" /></Svg>} />
            <Bar dark label="Transform (Shift+Ctrl+M)" icon={<TransformI />} />
          </div>
          <Dots className="mt-[5px] h-[2px] shrink-0" />
          <div className="h-[28px] shrink-0 flex items-center justify-between pl-[2px] pr-[11px] pt-[5px]">
            <div className="flex items-center">
              <Svg w={16} h={14}><path d="M1 3l4-2h10l-3 2zM1 6l4-2M1 3v1h11M1 7h11M1 10h11M1 13h11M12 3v10" fill="none" stroke="#222" /></Svg>
              <span className="text-[11.400px] text-[#3c3c3c]">Layers (Shift+Ctrl+L)</span>
            </div>
            <DockBtns />
          </div>
          <LayersPanel />
          <Dots className="mt-[4px] h-[2px] shrink-0" />
        </div>
        {/* right toolbars */}
        <div className="w-[73px] shrink-0 flex">
          <div className="w-[38px] flex flex-col items-center pt-[6px]">
            {COL1.map((it, i) => it === "sep"
              ? <div key={i} className="h-[12px] flex items-center"><div className="w-[18px] h-px bg-[#bdbdbd]" /></div>
              : <div key={i} className="h-[28px] flex items-center justify-center"><Svg>{it[0]}</Svg></div>)}
            <div className="mt-[20px] text-[#808080]">
              <svg width="10" height="14"><path d="M2 2l5 5-5 5" fill="none" stroke="currentColor" strokeWidth="2.200" /></svg>
            </div>
          </div>
          <div className="w-[35px] flex flex-col items-center pt-[6px]">
            {COL2.map((it, i) => (
              <div key={i} style={{ height: it.h }} className="flex items-center justify-center">
                {it.i
                  ? <div className={`w-[26px] h-[27px] flex items-center justify-center ${it.box ? "rounded-[5px] border border-[#c8c8c8] bg-[#f2f2f2]" : ""}`}><Svg>{it.i}</Svg></div>
                  : <div className="w-[18px] h-px bg-[#bdbdbd]" />}
              </div>
            ))}
          </div>
        </div>
      </div>
      {/* palette */}
      <div className="h-[17px] shrink-0 flex items-stretch border-t border-[#c8c8c8] pb-px">
        <div className="w-[14px] shrink-0">
          <svg width="14" height="15" className="block bg-white"><path d="M0 0l14 15M14 0L0 15" stroke="#8a1414" strokeWidth="1.200" /></svg>
        </div>
        <div className="w-[1114px] flex shrink-0">
          {PALETTE.map((c, i) => <div key={i} className="flex-1" style={{ backgroundColor: c }} />)}
        </div>
        <div className="flex-1 flex items-center justify-center">
          <svg width="8" height="12"><path d="M6.500 1.500L2 6l4.500 4.500" fill="none" stroke="#777" strokeWidth="2" /></svg>
        </div>
      </div>
      {/* palette scroller */}
      <div className="h-[13px] shrink-0 pr-[13px]">
        <div className="h-full bg-[#d4d4d4] pl-[3px] pt-[2px]">
          <div className="w-[219px] h-[8px] rounded-full bg-[#9e9e9e]" />
        </div>
      </div>
      {/* status */}
      <div className="relative flex-1 flex items-center text-[#333]">
        <div className="w-[71px] pl-[2px] text-[10.500px] leading-[13px] shrink-0">
          <div>Fill:</div>
          <div>Stroke:</div>
        </div>
        <div className="w-[56px] text-[10.500px] leading-[13px] shrink-0">
          <div>N/A</div>
          <div>N/A</div>
        </div>
        <span className="w-[14px] text-[11px] text-[#666] shrink-0">O:</span>
        <div className="w-[46px] h-[22px] rounded-[4px] border border-[#c8c8c8] bg-[#f0f0ee] flex items-center pl-[5px] pr-px shrink-0">
          <span className="flex-1 text-[11px] text-[#a8a8a8]">0</span>
          <Arrows />
        </div>
        <div className="ml-[3px] w-px h-full bg-[#bdbdbd] shrink-0" />
        <div className="ml-[3px]"><Eye /></div>
        <div className="ml-[4px] mt-[-2px]"><TinyLock open /></div>
        <Combo label={"\u2022Layer 1"} className="ml-[5px] w-[77px] h-[22px] shrink-0" pad="pl-[5px] pr-[4px]" />
        <span className="ml-[6px] w-[675px] shrink-0 text-[11.800px] whitespace-nowrap">No objects selected. Click, Shift+click, Alt+scroll mouse on top of objects, or drag around objects to select.</span>
        <div className="w-px h-full bg-[#bdbdbd] shrink-0" />
        <div className="w-[31px] pl-[2px] text-[10.500px] leading-[13px] shrink-0">
          <div>X:</div>
          <div>Y:</div>
        </div>
        <div className="w-[32px] text-[10.500px] leading-[13px] shrink-0">
          <div>0.00</div>
          <div>0.00</div>
        </div>
        <span className="text-[11px] w-[13px] shrink-0">Z:</span>
        <div className="w-[55px] h-[23px] rounded-[4px] border border-[#bdbdbd] bg-white flex items-center pl-[7px] pr-px shrink-0">
          <span className="flex-1 text-[11px]">349%</span>
          <Arrows />
        </div>
        <svg width="13" height="13" className="absolute right-0 bottom-0"><path d="M12 2L2 12M12 6l-6 6M12 10l-2 2" stroke="#aaa" /></svg>
      </div>
    </div>
  );
}
